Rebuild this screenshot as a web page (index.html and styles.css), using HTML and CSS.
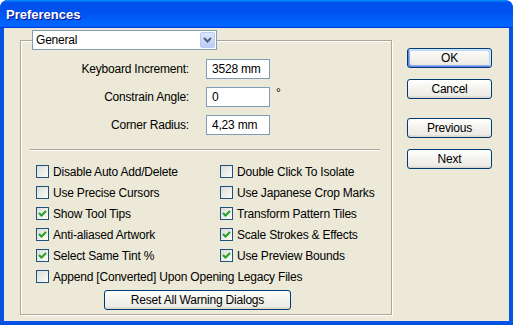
FILE: index.html
```html
<!DOCTYPE html>
<html lang="en">
<head>
    <meta charset="UTF-8">
    <title>Preferences</title>
    <link rel="stylesheet" href="styles.css">
</head>
<body>
    <div class="window">
        <div class="titlebar">
            <span class="title">Preferences</span>
        </div>

        <div class="client">
            <fieldset class="group">
                <legend class="legend">
                    <div class="select">
                        <span class="select-value">General</span>
                        <span class="select-arrow">
                            <svg width="9" height="6" viewBox="0 0 9 6"><polyline points="1,1 4.5,4.5 8,1" fill="none" stroke="#4d6185" stroke-width="2"/></svg>
                        </span>
                    </div>
                </legend>

                <div class="fields">
                    <div class="field">
                        <span class="field-label">Keyboard Increment:</span>
                        <span class="textbox">3528 mm</span>
                    </div>
                    <div class="field">
                        <span class="field-label">Constrain Angle:</span>
                        <span class="textbox">0</span>
                        <span class="unit">°</span>
                    </div>
                    <div class="field">
                        <span class="field-label">Corner Radius:</span>
                        <span class="textbox">4,23 mm</span>
                    </div>
                </div>

                <div class="separator"></div>

                <div class="checks">
                    <label class="check"><span class="box"></span>Disable Auto Add/Delete</label>
                    <label class="check"><span class="box"></span>Double Click To Isolate</label>
                    <label class="check"><span class="box"></span>Use Precise Cursors</label>
                    <label class="check"><span class="box"></span>Use Japanese Crop Marks</label>
                    <label class="check"><span class="box checked"></span>Show Tool Tips</label>
                    <label class="check"><span class="box checked"></span>Transform Pattern Tiles</label>
                    <label class="check"><span class="box checked"></span>Anti-aliased Artwork</label>
                    <label class="check"><span class="box checked"></span>Scale Strokes &amp; Effects</label>
                    <label class="check"><span class="box checked"></span>Select Same Tint %</label>
                    <label class="check"><span class="box checked"></span>Use Preview Bounds</label>
                    <label class="check check-wide"><span class="box"></span>Append [Converted] Upon Opening Legacy Files</label>
                </div>

                <button class="btn btn-reset">Reset All Warning Dialogs</button>
            </fieldset>

            <div class="actions">
                <button class="btn btn-default">OK</button>
                <button class="btn">Cancel</button>
                <button class="btn btn-gap">Previous</button>
                <button class="btn">Next</button>
            </div>
        </div>
    </div>
</body>
</html>
```

FILE: styles.css
```css
body {
    margin: 0;
    padding: 0;
    background: #fff;
    font-family: "Liberation Sans", Arial, sans-serif;
    font-size: 12px;
    letter-spacing: -0.2px;
    color: #000;
}
.window {
    width: 513px;
    height: 325px;
    box-sizing: border-box;
    display: flex;
    flex-direction: column;
    background: #0553e4;
    border-radius: 8px 8px 0 0;
    overflow: hidden;
}
.titlebar {
    height: 28px;
    flex: none;
    display: flex;
    align-items: center;
    padding-left: 6px;
    background: linear-gradient(180deg, #0997ff 0%, #0053ee 8%, #0050ee 40%, #0066ff 88%, #0066ff 93%, #005bff 95%, #003dd7 96%, #003dd7 100%);
}
.title {
    color: #fff;
    font-weight: bold;
    font-size: 13px;
    letter-spacing: 0;
    text-shadow: 1px 1px #0f1089;
    margin-top: 1px;
}
.client {
    flex: 1;
    display: flex;
    align-items: flex-start;
    margin: 0 4px 4px;
    background: #ece9d8;
}

/* group box */
.group {
    width: 372px;
    box-sizing: border-box;
    margin: 2px 0 0 16px;
    padding: 0 0 4px 0;
    min-width: 0;
    border: 1px solid #aca899;
    box-shadow: inset 1px 1px #fff, 1px 1px #fff;
}
.legend {
    margin-left: 11px;
    padding: 0;
}
.select {
    width: 185px;
    height: 20px;
    box-sizing: border-box;
    display: flex;
    align-items: center;
    border: 1px solid #7f9db9;
    background: #fff;
}
.select-value {
    flex: 1;
    padding-left: 3px;
}
.select-arrow {
    width: 15px;
    height: 16px;
    margin: 1px;
    box-sizing: border-box;
    display: flex;
    align-items: center;
    justify-content: center;
    border: 1px solid #b9cbf3;
    border-radius: 2px;
    background: linear-gradient(180deg, #dce7fd, #b9cdf6);
}

/* numeric fields */
.fields {
    margin-top: 9px;
}
.field {
    display: flex;
    align-items: center;
    height: 20px;
}
.field + .field {
    margin-top: 8px;
}
.field-label {
    width: 168px;
    text-align: right;
    margin-right: 17px;
}
.textbox {
    width: 64px;
    height: 20px;
    box-sizing: border-box;
    padding-left: 5px;
    line-height: 18px;
    border: 1px solid #7f9db9;
    background: #fff;
}
.unit {
    margin-left: 6px;
    align-self: flex-start;
    line-height: 12px;
}
.separator {
    height: 1px;
    margin: 14px 11px 0 9px;
    background: #aca899;
    border-bottom: 1px solid #fff;
}

/* checkboxes */
.checks {
    display: grid;
    grid-template-columns: 184px auto;
    grid-auto-rows: 21px;
    margin-top: 10px;
    padding-left: 15px;
}
.check {
    display: flex;
    align-items: center;
    white-space: nowrap;
}
.check-wide {
    grid-column: span 2;
}
.box {
    width: 13px;
    height: 13px;
    box-sizing: border-box;
    margin-right: 4px;
    border: 1px solid #1c5180;
    background: linear-gradient(135deg, #dcdcd7, #fbfbf9);
}
.box.checked {
    background-image: url("data:image/svg+xml,%3Csvg xmlns='http://www.w3.org/2000/svg' width='11' height='11'%3E%3Cpolyline points='2,5 4.5,7.5 9,3' fill='none' stroke='%2321a121' stroke-width='2'/%3E%3C/svg%3E"), linear-gradient(135deg, #dcdcd7, #fbfbf9);
    background-repeat: no-repeat;
}

/* push buttons */
.btn {
    width: 85px;
    height: 20px;
    padding: 0;
    box-sizing: border-box;
    font-family: inherit;
    font-size: 12px;
    letter-spacing: -0.2px;
    color: #000;
    border: 1px solid #003c74;
    border-radius: 3px;
    background: linear-gradient(180deg, #fff, #f3f2ec 50%, #ecebe6 86%, #d6d0c5);
}
.btn-default {
    box-shadow: inset -1px 1px #cee7ff, inset 1px -1px #6982ee, inset -2px 2px #bcd4f6, inset 2px -2px #89ade4;
}
.btn-reset {
    display: block;
    width: 187px;
    margin: 3px 0 0 83px;
}
.actions {
    display: flex;
    flex-direction: column;
    gap: 11px;
    margin: 20px 0 0 15px;
}
.btn-gap {
    margin-top: 8px;
}
```
